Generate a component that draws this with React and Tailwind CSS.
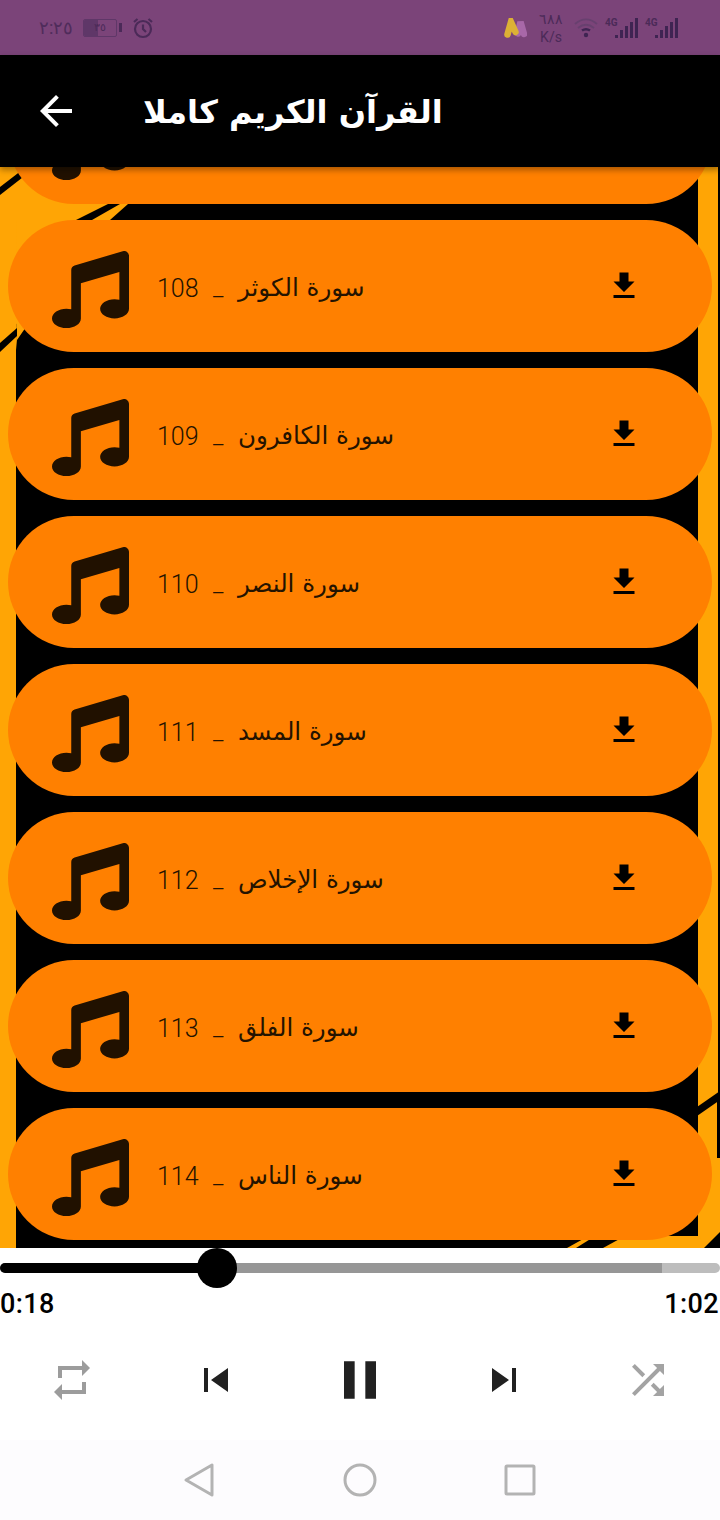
import React from "react";
import { FaMusic } from "react-icons/fa";
import { MdFileDownload, MdRepeat, MdSkipPrevious, MdPause, MdSkipNext, MdShuffle, MdArrowBack } from "react-icons/md";

const surahs = [
  ["107", "سورة الماعون"],
  ["108", "سورة الكوثر"],
  ["109", "سورة الكافرون"],
  ["110", "سورة النصر"],
  ["111", "سورة المسد"],
  ["112", "سورة الإخلاص"],
  ["113", "سورة الفلق"],
  ["114", "سورة الناس"],
];

function Backdrop() {
  return (
    <svg className="absolute inset-0 w-full h-full" viewBox="0 167 720 1081" preserveAspectRatio="none">
      <rect x="0" y="167" width="720" height="1081" fill="#000" />
      <rect x="0" y="167" width="16" height="1081" fill="#ffa505" />
      <polygon points="0,167 140,167 140,204 0,340" fill="#ffa505" />
      <polygon points="0,195 0,187 26,167 36,167" fill="#000" />
      <polygon points="76,220 108,204 120,204 92,220" fill="#000" />
      <polygon points="110,220 128,204 180,204 180,220" fill="#000" />
      <polygon points="16,350 17,220 100,220 17,340" fill="#ffa505" />
      <polygon points="0,352 0,343 17,328 17,336" fill="#000" />
      <rect x="698" y="167" width="20" height="1081" fill="#ffa505" />
      <polygon points="697,1107 720,1091 720,1100 697,1116" fill="#000" />
      <rect x="717" y="1100" width="3" height="58" fill="#000" />
      <rect x="718" y="1158" width="2" height="90" fill="#ffa505" />
      <polygon points="603,1248 625,1236 700,1236 704,1248" fill="#ffa505" />
      <polygon points="567,1248 585,1238 592,1238 576,1248" fill="#ffa505" />
      <polygon points="704,1248 720,1232 720,1248" fill="#000" />
    </svg>
  );
}

function Row({ num, title }) {
  return (
    <div className="h-[132px] shrink-0 rounded-full bg-[#ff8000] flex items-center pl-[44px] pr-[70px]">
      <FaMusic size={77} className="shrink-0 text-[#211100] mt-[6px]" />
      <div className="ml-[28px] mt-[4px] flex items-center text-[#241300] font-['Roboto',sans-serif] font-light">
        <span className="w-[56px] text-[25px] leading-none">{num}</span>
        <span className="w-[25px] text-[24px] leading-none">_</span>
        <span dir="rtl" className="text-[24.5px] leading-none font-['DejaVu_Sans',sans-serif] font-normal whitespace-nowrap">{title}</span>
      </div>
      <div className="flex-1" />
      <MdFileDownload size={36} className="shrink-0 text-black" />
    </div>
  );
}

function Signal() {
  return (
    <div className="relative w-[33px] h-[20px]">
      <span className="absolute left-0 top-0 text-[10px] leading-none font-bold text-[#4b2a58]">4G</span>
      <div className="absolute right-0 bottom-0 flex items-end gap-[2px]">
        <div className="w-[3px] h-[3px] bg-[#3f2452]" />
        <div className="w-[3px] h-[8px] bg-[#3f2452]" />
        <div className="w-[3px] h-[12px] bg-[#3f2452]" />
        <div className="w-[3px] h-[16px] bg-[#3f2452]" />
        <div className="w-[3px] h-[20px] bg-[#3f2452]" />
      </div>
    </div>
  );
}

export default function App() {
  return (
    <div className="w-[720px] h-[1520px] flex flex-col overflow-hidden bg-[#fdfcfe] font-['Roboto',sans-serif]">
      <div className="h-[55px] shrink-0 bg-[#7b4479] flex items-center justify-between pl-[39px] pr-[42px] text-[#4b2a58]">
        <div className="flex items-center gap-[10px]">
          <span className="text-[18px] leading-none opacity-90">٢:٢٥</span>
          <div className="flex items-center gap-[2px]">
            <div className="relative w-[34px] h-[18px] rounded-[2px] border border-[#5f3768] flex items-center justify-center text-[11px] leading-none overflow-hidden">
              <div className="absolute left-0 top-0 bottom-0 w-[14px] bg-[#5f3768]" />
              <span className="relative">٣٥</span>
            </div>
            <div className="w-[3px] h-[9px] bg-[#4b2a58]" />
          </div>
          <svg width="22" height="22" viewBox="0 0 22 22" fill="none" stroke="currentColor" strokeWidth="2.2">
            <circle cx="11" cy="12" r="8" />
            <path d="M11 7.5V12l3 3M2 5l3.5-3M20 5l-3.5-3" />
          </svg>
        </div>
        <div className="flex items-center">
          <svg width="23" height="20" viewBox="0 0 23 20" fill="none" strokeLinecap="round" strokeWidth="6.5" className="mr-[12px]">
            <path d="M14 15.5L16.5 4L20 16" stroke="#a868a8" />
            <path d="M3.5 16.5L7 4L11.5 14" stroke="#dcb135" />
          </svg>
          <div className="w-[24px] flex flex-col items-center text-[14px] leading-[18px] mr-[11px]">
            <span>٦٨٨</span>
            <span>K/s</span>
          </div>
          <svg width="24" height="20" viewBox="0 0 24 20" fill="none" stroke="#68406f" strokeWidth="2" className="mr-[7px]">
            <path d="M1 6c7-6 15-6 22 0M4 10c5-4 11-4 16 0" />
            <path d="M8 12.5c3-2 5-2 8 0" stroke="#3f2452" strokeWidth="2.5" />
            <circle cx="12" cy="17" r="2.2" fill="#3f2452" stroke="none" />
          </svg>
          <div className="flex items-center gap-[7px]">
            <Signal />
            <Signal />
          </div>
        </div>
      </div>

      <div className="h-[112px] shrink-0 relative z-10 bg-black flex items-center pl-[32px] shadow-[0_3px_6px_rgba(0,0,0,0.35)]">
        <MdArrowBack size={48} className="shrink-0 text-white" />
        <span dir="rtl" className="ml-[63px] mt-[2px] text-white text-[32px] leading-none font-bold font-['DejaVu_Sans',sans-serif] whitespace-nowrap">القرآن الكريم كاملا</span>
      </div>

      <div className="relative flex-1 min-h-0 overflow-hidden">
        <Backdrop />
        <div className="relative -mt-[95px] px-2 flex flex-col gap-4">
          {surahs.map(([n, t]) => (
            <Row key={n} num={n} title={t} />
          ))}
        </div>
      </div>

      <div className="h-[272px] shrink-0 bg-white flex flex-col">
        <div className="relative h-[40px] flex items-center">
          <div className="w-full h-[10px] rounded-full bg-[#bdbdbd] flex overflow-hidden">
            <div className="w-[217px] bg-black" />
            <div className="w-[445px] bg-[#969696]" />
          </div>
          <div className="absolute left-[197px] top-0 w-[40px] h-[40px] rounded-full bg-black" />
        </div>
        <div className="flex justify-between pr-[1px] text-[27px] leading-none font-medium tracking-[0.4px] text-black mt-[3px]">
          <span>0:18</span>
          <span>1:02</span>
        </div>
        <div className="mt-[38px] relative h-[48px] flex items-center pl-[48px]">
          <MdRepeat size={48} className="shrink-0 text-[#9c9c9c]" />
          <MdSkipPrevious size={48} className="shrink-0 text-[#212121] ml-[96px]" />
          <MdPause size={64} className="shrink-0 text-[#212121] ml-[88px]" />
          <MdSkipNext size={48} className="shrink-0 text-[#212121] ml-[88px]" />
          <MdShuffle size={48} className="shrink-0 text-[#a3a3a3] ml-[96px]" />
        </div>
        <div className="flex-1 bg-[#fdfcfe] flex items-center justify-center gap-[124px] mt-[36px]">
          <svg width="36" height="36" viewBox="0 0 36 36" fill="none" stroke="#b3b3b3" strokeWidth="3" strokeLinejoin="round">
            <path d="M30 3v30L4 18z" />
          </svg>
          <svg width="36" height="36" viewBox="0 0 36 36" fill="none" stroke="#b3b3b3" strokeWidth="3">
            <circle cx="18" cy="18" r="15" />
          </svg>
          <svg width="36" height="36" viewBox="0 0 36 36" fill="none" stroke="#b3b3b3" strokeWidth="3" strokeLinejoin="round">
            <rect x="4" y="4" width="28" height="28" rx="1" />
          </svg>
        </div>
      </div>
    </div>
  );
}
